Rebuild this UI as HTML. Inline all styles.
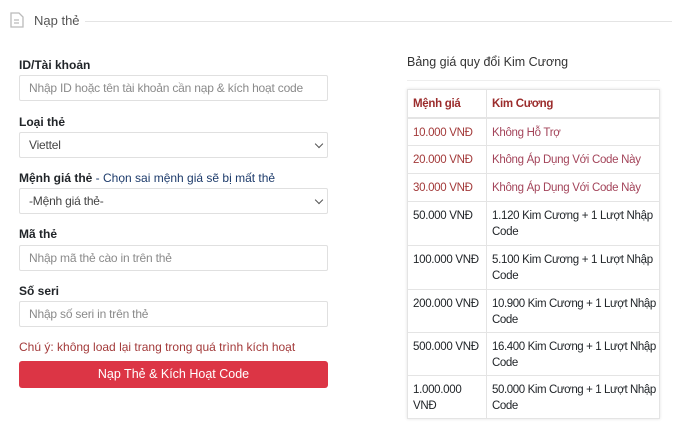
<!DOCTYPE html>
<html><head><meta charset="utf-8"><style>
*{box-sizing:border-box;margin:0;padding:0}
body{width:700px;height:427px;background:#fff;font-family:"Liberation Sans",sans-serif;font-size:12px;color:#212529;position:relative;overflow:hidden}
.a{position:absolute}
.lbl{position:absolute;left:19px;font-weight:bold;font-size:12px;color:#212529}
.inp{position:absolute;left:19px;width:309px;height:26px;border:1px solid #e0e0e0;border-radius:2px;padding-left:9px;line-height:24px;color:#8a8a8a;font-size:12px;letter-spacing:-0.2px}
.sel{color:#444}
.sel:after{content:"";position:absolute;right:5px;top:8px;width:5px;height:5px;border-right:1.3px solid #555;border-bottom:1.3px solid #555;transform:rotate(45deg)}
table{position:absolute;left:407px;top:89px;width:253px;border-collapse:collapse;box-shadow:0 0 3px rgba(0,0,0,.12);table-layout:fixed;font-size:11.5px;letter-spacing:-0.3px}
td,th{border:1px solid #e4e4e4;padding:0 5px;text-align:left;vertical-align:top;font-weight:normal;line-height:16px;overflow:hidden;white-space:nowrap}
th{font-weight:bold;color:#9b2c2c;height:28px;padding-top:6px;border-bottom:2px solid #e4e4e4}
td{padding-top:6px}
tr.s td{height:28px}
tr.d td{height:44px}
tr.d3 td{height:43px}
.r td{color:#a33a3a}
.r td:nth-child(2){color:#a3445a}
</style></head><body>
<svg class="a" style="left:10px;top:12px" width="14" height="16" viewBox="0 0 14 16"><path d="M1 1h8l4 4v10H1z" fill="none" stroke="#bbb" stroke-width="1.3"/><path d="M4 8h5M4 11h5" stroke="#bbb" stroke-width="1.2"/></svg>
<div class="a" style="left:34px;top:13px;font-size:13px;color:#555">Nạp thẻ</div>
<div class="a" style="left:85px;top:21px;width:587px;height:1px;background:#e4e4e4"></div>

<div class="lbl" style="top:58px">ID/Tài khoản</div>
<div class="inp" style="top:75px">Nhập ID hoặc tên tài khoản cần nạp &amp; kích hoạt code</div>
<div class="lbl" style="top:115px">Loại thẻ</div>
<div class="inp sel" style="top:132px">Viettel</div>
<div class="lbl" style="top:171px">Mệnh giá thẻ <span style="font-weight:normal;color:#1d3b6b">- Chọn sai mệnh giá sẽ bị mất thẻ</span></div>
<div class="inp sel" style="top:188px">-Mệnh giá thẻ-</div>
<div class="lbl" style="top:227px">Mã thẻ</div>
<div class="inp" style="top:245px">Nhập mã thẻ cào in trên thẻ</div>
<div class="lbl" style="top:284px">Số seri</div>
<div class="inp" style="top:301px">Nhập số seri in trên thẻ</div>
<div class="a" style="left:19px;top:340px;color:#a33a3a">Chú ý: không load lại trang trong quá trình kích hoạt</div>
<div class="a" style="left:19px;top:361px;width:309px;height:27px;background:#dc3545;border-radius:3px;color:#fff;text-align:center;line-height:27px;font-size:12.5px">Nạp Thẻ &amp; Kích Hoạt Code</div>

<div class="a" style="left:407px;top:55px;font-size:12.5px;color:#333">Bảng giá quy đổi Kim Cương</div>
<div class="a" style="left:407px;top:80px;width:253px;height:1px;background:#eee"></div>
<table>
<colgroup><col style="width:79px"><col></colgroup>
<tr><th>Mệnh giá</th><th>Kim Cương</th></tr>
<tr class="s r"><td>10.000 VNĐ</td><td>Không Hỗ Trợ</td></tr>
<tr class="s r"><td>20.000 VNĐ</td><td>Không Áp Dụng Với Code Này</td></tr>
<tr class="s r"><td>30.000 VNĐ</td><td>Không Áp Dụng Với Code Này</td></tr>
<tr class="d"><td>50.000 VNĐ</td><td>1.120 Kim Cương + 1 Lượt Nhập<br>Code</td></tr>
<tr class="d"><td>100.000 VNĐ</td><td>5.100 Kim Cương + 1 Lượt Nhập<br>Code</td></tr>
<tr class="d3"><td>200.000 VNĐ</td><td style="letter-spacing:-0.4px">10.900 Kim Cương + 1 Lượt Nhập<br>Code</td></tr>
<tr class="d3"><td>500.000 VNĐ</td><td style="letter-spacing:-0.4px">16.400 Kim Cương + 1 Lượt Nhập<br>Code</td></tr>
<tr class="d3"><td>1.000.000<br>VNĐ</td><td style="letter-spacing:-0.4px">50.000 Kim Cương + 1 Lượt Nhập<br>Code</td></tr>
</table>
</body></html>
